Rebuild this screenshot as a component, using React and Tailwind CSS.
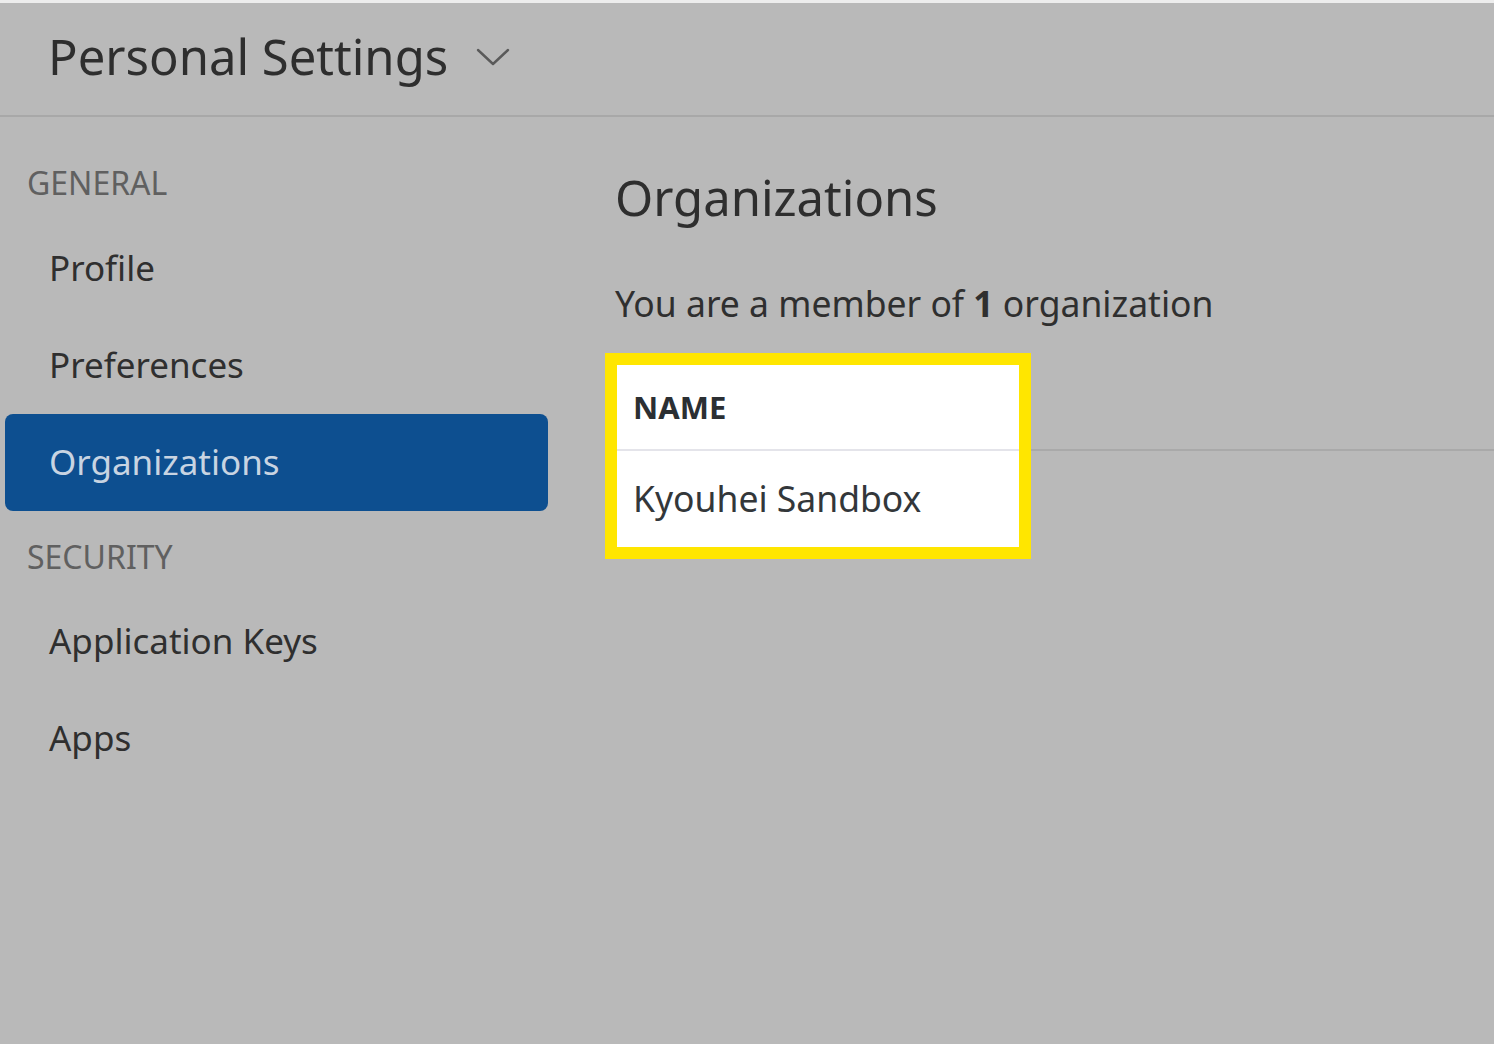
import React from 'react'

function NavItem({ label, active }) {
  return (
    <div
      className={
        active
          ? 'mx-[5px] h-[97px] flex items-center pl-[44px] rounded-[8px] bg-[#0d4f90] text-[#c8d4e2] text-[35px]'
          : 'mx-[5px] h-[97px] flex items-center pl-[44px] text-[#2f2f2f] text-[35px]'
      }
    >
      {label}
    </div>
  )
}

function SectionLabel({ children, className }) {
  return (
    <div className={'h-[50px] flex items-center pl-[27px] text-[32px] text-[#606060] ' + className}>
      {children}
    </div>
  )
}

export default function App() {
  return (
    <div className="min-h-screen bg-[#b9b9b9] border-t-[3px] border-[#ededed] font-['Noto_Sans',sans-serif]">
      <header className="h-[114px] flex items-center pl-[48px] border-b-2 border-[#a8a8a8]">
        <h1 className="text-[49px] text-[#2e2e2e] leading-none -mt-[6px]">Personal Settings</h1>
        <svg className="ml-[28px] -mt-[4px]" width="34" height="18" viewBox="0 0 34 18" fill="none" stroke="#5a5a5a" strokeWidth="2.4" strokeLinecap="round" strokeLinejoin="round">
          <polyline points="2 2 17 16 32 2"></polyline>
        </svg>
      </header>

      <div className="flex">
        <aside className="w-[553px] shrink-0">
          <SectionLabel className="mt-[41px] mb-[12px]">GENERAL</SectionLabel>
          <NavItem label="Profile" />
          <NavItem label="Preferences" />
          <NavItem label="Organizations" active />
          <SectionLabel className="mt-[21px] mb-[11px]">SECURITY</SectionLabel>
          <NavItem label="Application Keys" />
          <NavItem label="Apps" />
        </aside>

        <main className="flex-1 pl-[62px]">
          <h2 className="mt-[50px] text-[49px] leading-[60px] text-[#2e2e2e]">Organizations</h2>
          <p className="mt-[52px] text-[35.5px] leading-[48px] text-[#2f2f2f]">
            You are a member of <span className="font-bold">1</span> organization
          </p>
          <div className="mt-[26px] -ml-[10px] flex items-start">
            <div className="w-[426px] border-[12px] border-[#ffe600] bg-white">
              <div className="h-[86px] flex items-center pl-[16px] border-b-2 border-[#e4e4ea] text-[31px] font-bold text-[#2b2f33]">
                NAME
              </div>
              <div className="h-[96px] flex items-center pl-[16px] text-[35.5px] text-[#33373a]">
                Kyouhei Sandbox
              </div>
            </div>
            <div className="flex-1 mt-[96px] h-[2px] bg-[#a9a9a9]"></div>
          </div>
        </main>
      </div>
    </div>
  )
}
